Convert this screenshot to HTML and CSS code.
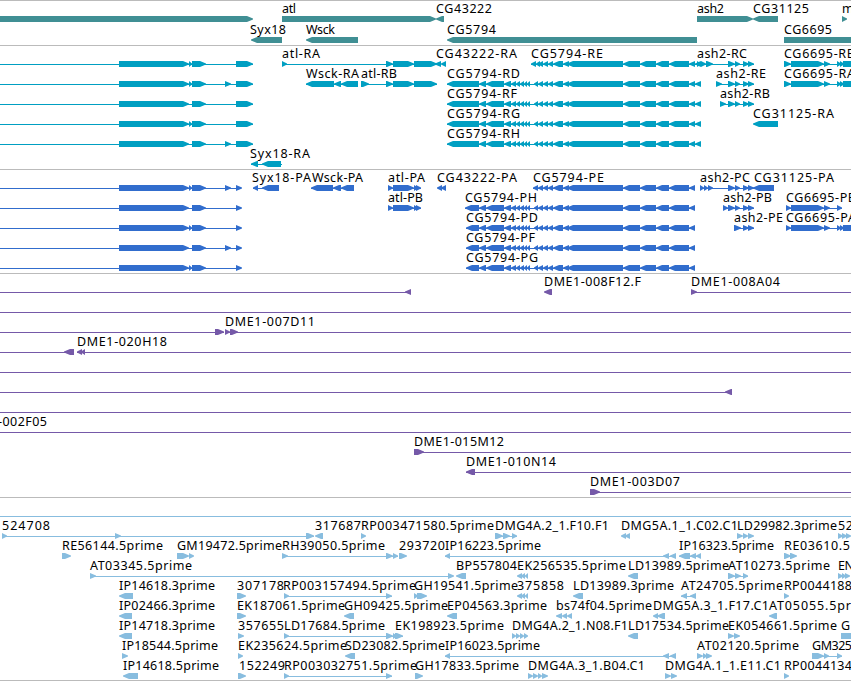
FILE: index.html
```
<!DOCTYPE html>
<html lang="en">
<head>
  <meta charset="UTF-8">
  <title>Genome tracks</title>
  <link rel="stylesheet" href="styles.css">
</head>
<body>
  <main class="browser">
    <section class="track genes"><svg id="genes"></svg></section>
    <section class="track transcripts"><svg id="transcripts"></svg></section>
    <section class="track proteins"><svg id="proteins"></svg></section>
    <section class="track clones"><svg id="clones"></svg></section>
    <section class="track ests"><svg id="ests"></svg></section>
  </main>
  <script src="tracks.js"></script>
</body>
</html>
```

FILE: styles.css
```
body {
  margin: 0;
  background: #fff;
}
.browser {
  display: flex;
  flex-direction: column;
  width: 851px;
  height: 680px;
  overflow: hidden;
  border-bottom: 1px solid #bbb;
}
.track {
  box-sizing: border-box;
  border-top: 1px solid #bbb;
}
.track svg {
  display: block;
  width: 100%;
  height: 100%;
  overflow: hidden;
}
.track text {
  font-family: "Noto Sans", "DejaVu Sans", sans-serif;
  font-size: 12.5px;
  fill: #000;
}
.genes {
  height: 45px;
  color: #408f94;
}
.transcripts {
  height: 124px;
  color: #009fc2;
}
.proteins {
  height: 104px;
  color: #316dcd;
}
.clones {
  height: 224px;
  color: #7559a8;
}
.ests {
  height: 183px;
  color: #88bddf;
}
.line, .block {
  fill: currentColor;
}
```

FILE: tracks.js
```
// Each row: [shapes, labels]
// shapes: "a-b" intron line, "a>b" forward block, "a<b" reverse block
// labels: "name@left:width"
const exons = '479<486 486<504 504<511 511<516 516<520 520<524 524<527 527<530 534<538 ';
const tail = '538<543 543<548 548<553 553<563 563<569 567<623 623<640 640<656 656<669 669<689 ';
const ash = '728>735 735>740 743>749 748>754 ';

const tracks = {
  genes: { step: 21, rows: [
    ['0>253 282>436 436<444 697>753 753<778 842>847',
      'atl@282:14 CG43222@436:56 ash2@697:27 CG31125@753:56 m@842:10'],
    ['251<282 306<358 447<697 784>870',
      'Syx18@250:36 Wsck@306:29 CG5794@447:49 CG6695@784:48']
  ]},
  transcripts: { step: 20, rows: [
    ['0-253 119>189 189>192 192>206 236>253 282-437 282>287 386>393 393>414 414>437 435<441 441<446 531-701 531<536 536<540 ' + tail +
      '689<695 695<701 697-754 697>701 701>706 706>713 ' + ash + '784-851 784>791 791>824 824>830 837>841 840>844 843>870',
      'atl-RA@282:38 CG43222-RA@436:81 CG5794-RE@531:72 ash2-RC@697:50 CG6695-RB@784:71'],
    ['0-253 119>189 189>192 192>206 225>231 236>253 306-358 306<334 334<341 341<358 361-437 361>369 386>393 393>414 414>437 447-701 447<479 ' + exons + tail +
      '689<695 695<701 716-754 716>722 ' + ash + '784-851 784>791 791>824 824>830 837>841 840>844 843>870',
      'Wsck-RA@306:53 atl-RB@361:36 CG5794-RD@447:73 ash2-RE@716:50 CG6695-RA@784:71'],
    ['0-253 119>189 192>206 236>253 447-701 447<479 ' + exons + tail + '689<695 695<701 720-754 720>726 ' + ash,
      'CG5794-RF@447:70 ash2-RB@720:50'],
    ['0-253 119>189 189>192 192>206 236>253 447-701 447<479 ' + exons + tail + '689<695 695<701 753<778',
      'CG5794-RG@447:73 CG31125-RA@753:81'],
    ['0-253 119>189 192>206 225>231 236>253 447-701 447<479 ' + exons + tail + '689<695 695<701',
      'CG5794-RH@447:73'],
    ['251-282 251<258 262<281', 'Syx18-RA@250:60']
  ]},
  proteins: { step: 20, rows: [
    ['0-241 119>189 189>192 192>206 225>231 236>242 253-279 253<258 262<279 311-354 311<333 333<341 341<354 388-421 388>393 393>414 414>418 416>421 437<442 441<446 533-695 533<538 ' + tail +
      '689<695 700-754 700>704 704>708 708>713 ' + ash + '753<774',
      'Syx18-PA@252:59 Wsck-PA@312:51 atl-PA@388:37 CG43222-PA@437:80 CG5794-PE@533:71 ash2-PC@700:50 CG31125-PA@754:80'],
    ['0-241 119>189 192>206 236>242 388-421 388>393 393>414 414>418 416>421 465-695 465<479 ' + exons + tail +
      '689<695 723-754 723>728 ' + ash + '786-842 786>791 791>824 824>830 837>842',
      'atl-PB@388:35 CG5794-PH@465:72 ash2-PB@723:49 CG6695-PB@786:70'],
    ['0-241 119>189 189>192 192>206 236>242 466-695 466<479 ' + exons + tail +
      '689<695 734-754 734>741 743>749 748>754 786-851 786>791 791>824 824>830 837>841 840>844 843>870',
      'CG5794-PD@466:72 ash2-PE@734:49 CG6695-PA@786:70'],
    ['0-241 119>189 192>206 225>231 236>242 466-695 466<479 ' + exons + tail + '689<695', 'CG5794-PF@466:69'],
    ['0-241 119>189 189>192 192>206 236>242 466-695 466<479 ' + exons + tail + '689<695', 'CG5794-PG@466:72']
  ]},
  clones: { step: 20, rows: [
    ['0-411 405<411 544<552 691-851 691>697', 'DME1-008F12.F@544:97 DME1-008A04@691:89'],
    ['0-851', ''],
    ['0-224 215>224 225-851 225>230 230>238', 'DME1-007D11@225:90'],
    ['0-74 64<74 77-851 77<82 81<85', 'DME1-020H18@77:90'],
    ['0-851', ''],
    ['0-732 725<732', ''],
    ['0-851', ''],
    ['0-851', '-002F05@-2:49'],
    ['414-851 414>424', 'DME1-015M12@414:90'],
    ['466-851 466<475', 'DME1-010N14@466:90'],
    ['590-851 590>600', 'DME1-003D07@590:90']
  ]},
  ests: { step: 20, rows: [
    ['0-851', ''],
    ['2-314 2>7 115>121 306>314 315<323 361>366 495-517 495>503 503>510 512>517 621<626 625<630 737>743 743>748 748>754 838>843 842>847 846>851',
      '524708@2:48 317687@315:46 RP003471580.5prime@361:133 DMG4A.2_1.F10.F1@495:114 DMG5A.1_1.C02.C1@621:117 LD29982.3prime@737:100 52@838:15'],
    ['62>71 177>189 189>194 282-398 282>288 386>393 393>398 399>407 445-676 445<450 663<669 670<676 679-701 679<690 690<696 696<701 784>791 790>797',
      'RE56144.5prime@62:101 GM19472.5prime@177:105 RH39050.5prime@282:103 293720@399:46 IP16223.5prime@445:96 IP16323.5prime@679:95 RE03610.5@784:66'],
    ['90-453 90>96 448>454 456<466 517<522 521<525 525<528 628<638 728-748 728>735 735>741 743>748 838>843 842>846 845>850',
      'AT03345.5prime@90:102 BP557804@456:61 EK256535.5prime@517:109 LD13989.5prime@628:101 AT10273.5prime@728:102 EN@838:16'],
    ['119<133 237>246 284-392 284>289 386>392 414>418 417>427 517<522 521<525 525<528 573<583 681-696 681<687 690<696 784>789',
      'IP14618.3prime@119:96 307178@237:47 RP003157494.5prime@283:133 GH19541.5prime@414:104 375858@517:47 LD13989.3prime@573:101 AT24705.5prime@681:102 RP0044188@784:68'],
    ['119<132 237>246 344<354 447<457 556<562 562<567 567<572 653<658 657<665 769<777',
      'IP02466.3prime@119:96 EK187061.5prime@237:108 GH09425.5prime@344:104 EP04563.3prime@447:100 bs74f04.5prime@556:96 DMG5A.3_1.F17.C1@653:116 AT05055.5pr@769:82'],
    ['119<132 238>244 284-403 284>289 386>393 393>397 395>403 512>516 516>520 520>524 524>528 628<638 728>734 734>740 841>870',
      'IP14718.3prime@119:96 357655@238:46 LD17684.5prime@284:101 EK198923.5prime@395:109 DMG4A.2_1.N08.F1@512:116 LD17534.5prime@628:101 EK054661.5prime@728:109 G@841:9'],
    ['122>128 238>243 345<355 445-676 445<450 663<669 670<676 697>703 703>707 706>712 812-842 812>824 824>829 837>842',
      'IP18544.5prime@122:96 EK235624.5prime@238:109 SD23082.5prime@345:100 IP16023.5prime@445:95 AT02120.5prime@697:102 GM325@812:40'],
    ['123<138 238>246 284-392 284>289 386>392 415>423 528>533 533>538 538>542 542>548 665>671 671>677 784>789',
      'IP14618.5prime@123:96 152249@239:46 RP003032751.5prime@284:133 GH17833.5prime@415:104 DMG4A.3_1.B04.C1@528:117 DMG4A.1_1.E11.C1@665:116 RP0044134@784:68']
  ]}
};

function drawShape(shape, y) {
  const [, a, kind, b] = shape.match(/^(\d+)([-<>])(\d+)$/);
  const left = Number(a);
  const right = Number(b);
  if (kind === '-') {
    return `<rect class="line" x="${left}" y="${y + 3}" width="${right - left}" height="1"/>`;
  }
  // heads bulge slightly and come to a one pixel tip
  const head = Math.min(6, right - left);
  const tip = kind === '>' ? right : left;
  const back = kind === '>' ? left : right;
  const dir = kind === '>' ? -1 : 1;
  const neck = tip + dir * head;
  const mid = tip + dir * head * 0.4;
  const points = [
    [back, y], [neck, y], [mid, y + 1.6], [tip, y + 2.6],
    [tip, y + 3.6], [mid, y + 4.6], [neck, y + 6], [back, y + 6]
  ];
  return `<polygon class="block" points="${points.join(' ')}"/>`;
}

function drawLabel(label, y) {
  const [name, place] = label.split('@');
  const [x, width] = place.split(':');
  return `<text x="${x}" y="${y - 3}" textLength="${width}">${name}</text>`;
}

for (const id in tracks) {
  const { step, rows } = tracks[id];
  let out = '';
  rows.forEach(([shapes, labels], i) => {
    const y = 15 + i * step;
    out += shapes.split(' ').filter(Boolean).map(s => drawShape(s, y)).join('');
    out += labels.split(' ').filter(Boolean).map(l => drawLabel(l, y)).join('');
  });
  document.getElementById(id).innerHTML = out;
}
```
